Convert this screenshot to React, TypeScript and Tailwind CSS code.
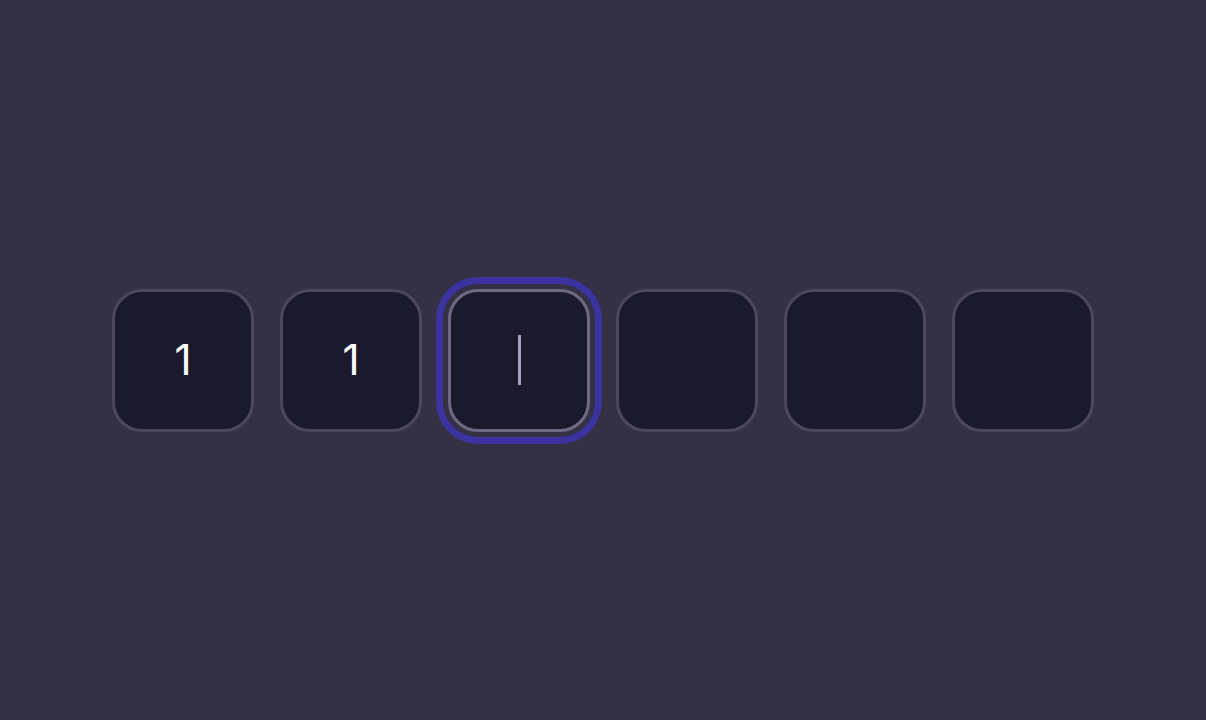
import React from "react";

const digits = ["1", "1", "", "", "", ""];
const activeIndex = 2;

export default function App() {
  return (
    <div
      className="flex h-[720px] w-full items-center justify-center bg-[#343144]"
      style={{ fontFamily: "Inter, 'Noto Sans', sans-serif" }}
    >
      <div className="flex gap-[26px]">
        {digits.map((d, i) => {
          const active = i === activeIndex;
          return (
            <div
              key={i}
              className={
                active
                  ? "flex h-[143px] w-[142px] items-center justify-center rounded-[30px] border-[3px] border-[#6e6a84] bg-[#1b1a2d] shadow-[0_0_0_5px_#343144,0_0_0_12px_#3a33a0]"
                  : "flex h-[143px] w-[142px] items-center justify-center rounded-[30px] border-[3px] border-[#4a475e] bg-[#1b1a2d]"
              }
            >
              {active ? (
                <div className="h-[50px] w-[3px] bg-[#a7a3c0]" />
              ) : (
                <span className="text-[42px] font-normal leading-none text-white">{d}</span>
              )}
            </div>
          );
        })}
      </div>
    </div>
  );
}
